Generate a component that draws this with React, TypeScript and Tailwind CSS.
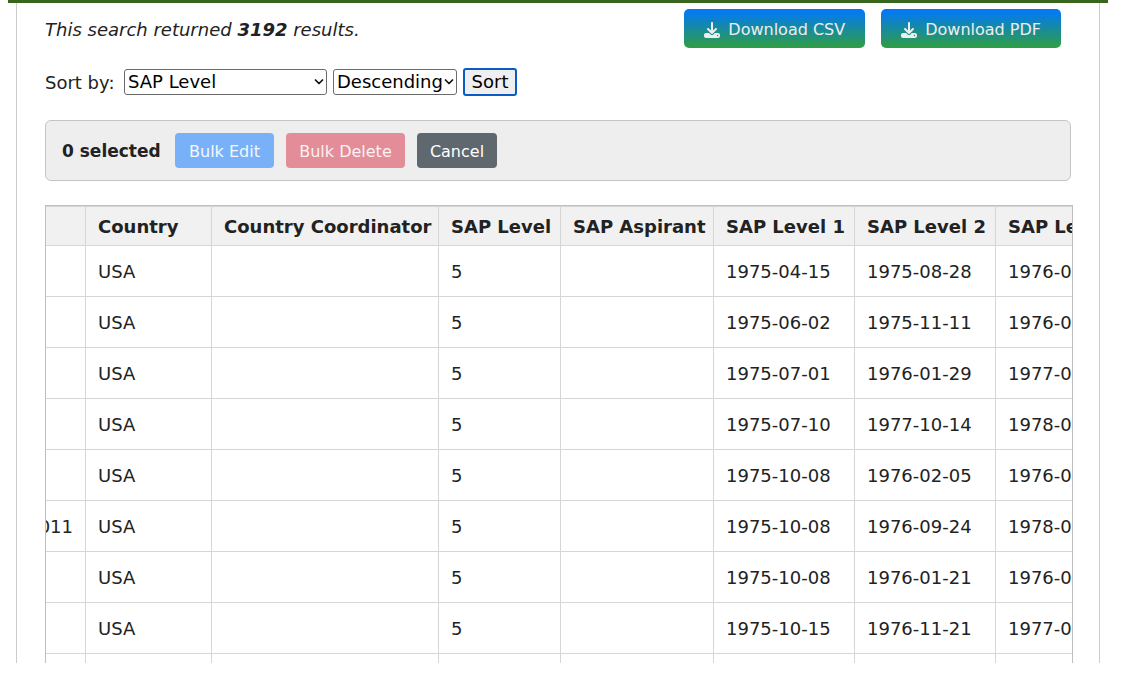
import React from "react";
import { FaDownload } from "react-icons/fa6";

const columns = [
  { label: "Country", width: "w-[126px]" },
  { label: "Country Coordinator", width: "w-[227px]" },
  { label: "SAP Level", width: "w-[122px]" },
  { label: "SAP Aspirant", width: "w-[153px]" },
  { label: "SAP Level 1", width: "w-[141px]" },
  { label: "SAP Level 2", width: "w-[141px]" },
  { label: "SAP Level 3", width: "w-[141px]" },
];

const rows = [
  ["", "USA", "", "5", "", "1975-04-15", "1975-08-28", "1976-01-12"],
  ["", "USA", "", "5", "", "1975-06-02", "1975-11-11", "1976-05-20"],
  ["", "USA", "", "5", "", "1975-07-01", "1976-01-29", "1977-03-08"],
  ["", "USA", "", "5", "", "1975-07-10", "1977-10-14", "1978-04-17"],
  ["", "USA", "", "5", "", "1975-10-08", "1976-02-05", "1976-06-22"],
  ["2011", "USA", "", "5", "", "1975-10-08", "1976-09-24", "1978-02-03"],
  ["", "USA", "", "5", "", "1975-10-08", "1976-01-21", "1976-05-11"],
  ["", "USA", "", "5", "", "1975-10-15", "1976-11-21", "1977-06-30"],
  ["", "USA", "", "5", "", "1975-11-03", "1976-12-02", "1977-08-15"],
];

function DownloadLink({ label }: { label: string }) {
  return (
    <a
      href="#download"
      className="flex h-[39px] items-center gap-2 rounded-[5px] bg-linear-to-b/srgb from-[#0077ff] to-[#2f9e41] px-5 pt-0.5 text-base whitespace-nowrap text-[#eeeeee]"
    >
      <FaDownload className="size-4" aria-hidden="true" />
      {label}
    </a>
  );
}

function SortSelect({ label, options, className }: { label: string; options: string[]; className: string }) {
  return (
    <span className={`relative flex h-[26px] ${className}`}>
      <select
        aria-label={label}
        className="w-full appearance-none rounded-[3px] border border-[#6b6b6b] bg-white pl-[3px] text-lg leading-6 text-black"
      >
        {options.map((option) => (
          <option key={option}>{option}</option>
        ))}
      </select>
      <svg viewBox="0 0 10 6" className="pointer-events-none absolute top-[10px] right-[3px] h-[6px] w-[10px]" fill="none" aria-hidden="true">
        <path d="M1.500 1 5 4.500 8.500 1" stroke="#111" strokeWidth="1.700" strokeLinecap="round" strokeLinejoin="round" />
      </svg>
    </span>
  );
}

export default function App() {
  return (
    <div className="flex h-screen flex-col bg-white pr-[30px] pb-[17px] pl-2 font-['Verdana','DejaVu_Sans',sans-serif] text-lg text-[#222222]">
      <div className="h-[3px] shrink-0 bg-[#3a651c]" />
      <main className="mx-2 min-h-0 flex-1 overflow-hidden border-x border-[#cccccc] pr-[26px] pl-7">
        <div className="flex justify-between pt-1.5 pr-3">
          <p className="leading-[42px] italic">
            This search returned <strong>3192</strong> results.
          </p>
          <div className="flex gap-4">
            <DownloadLink label="Download CSV" />
            <DownloadLink label="Download PDF" />
          </div>
        </div>

        <form className="mt-[17px] flex h-7 items-center gap-1.5" onSubmit={(e) => e.preventDefault()}>
          <span className="w-[73px] pt-0.5">Sort by:</span>
          <SortSelect label="Sort by" options={["SAP Level", "Country", "Country Coordinator"]} className="w-[203px]" />
          <SortSelect label="Sort direction" options={["Descending", "Ascending"]} className="w-[124px]" />
          <button type="submit" className="h-7 w-[54px] rounded-[3px] border-2 border-[#0a5bc4] bg-[#efefef] leading-6 text-black">
            Sort
          </button>
        </form>

        <section className="mt-6 mr-0.5 flex h-[61px] items-center gap-3 rounded-md border border-[#c4c4c4] bg-[#eeeeee] px-4">
          <strong className="w-[101px] pt-0.5 text-[17px] whitespace-nowrap">0 selected</strong>
          <button type="button" disabled className="h-[35px] w-[99px] rounded bg-[#78b1f8] pt-0.5 text-base text-[#f4f8fd]">
            Bulk Edit
          </button>
          <button type="button" disabled className="h-[35px] w-[119px] rounded bg-[#e38d98] pt-0.5 text-base text-[#fbf0f2]">
            Bulk Delete
          </button>
          <button type="button" className="h-[35px] w-20 rounded bg-[#60686f] pt-0.5 text-base text-white">
            Cancel
          </button>
        </section>

        <div className="mt-6 overflow-hidden border border-[#bfbfbf]">
          <table className="w-[1091px] table-fixed border-separate border-spacing-0">
            <thead>
              <tr>
                <th className="h-10 w-10 border-y border-r border-[#d6d6d6] bg-[#f1f1f1]" />
                {columns.map((column) => (
                  <th
                    key={column.label}
                    className={`h-10 border-y border-r border-[#d6d6d6] bg-[#f1f1f1] p-0 pt-0.5 pl-3 text-left whitespace-nowrap ${column.width}`}
                  >
                    {column.label}
                  </th>
                ))}
              </tr>
            </thead>
            <tbody>
              {rows.map((row, r) => (
                <tr key={r}>
                  {row.map((value, c) => (
                    <td key={c} className="h-[51px] border-r border-b border-[#d6d6d6] p-0 pt-0.5 whitespace-nowrap">
                      {c === 0 ? (
                        <div className="flex justify-end overflow-hidden pr-3">{value}</div>
                      ) : (
                        <div className="pl-3">{value}</div>
                      )}
                    </td>
                  ))}
                </tr>
              ))}
            </tbody>
          </table>
        </div>
      </main>
    </div>
  );
}
